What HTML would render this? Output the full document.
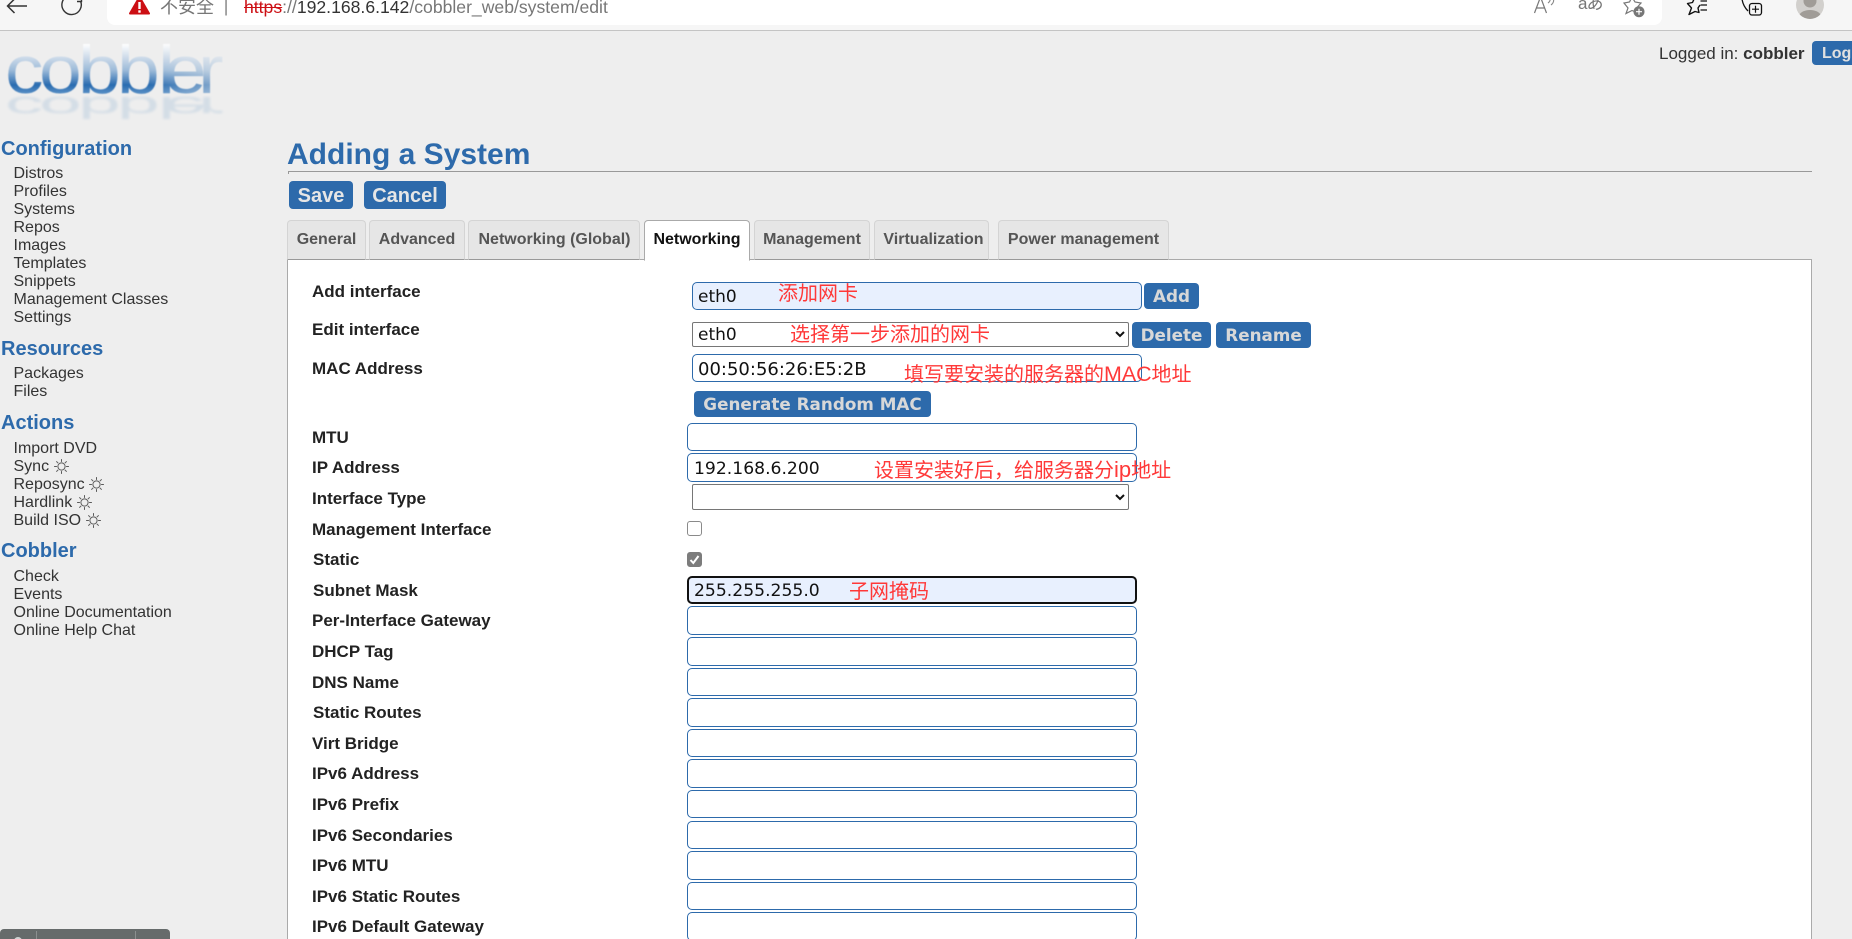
<!DOCTYPE html>
<html lang="zh-CN">
<head>
<meta charset="utf-8">
<title>Adding a System</title>
<style>
html,body{margin:0;padding:0;width:1852px;height:939px;overflow:hidden;background:#eee;font-family:"Liberation Sans",Arial,sans-serif;color:#333}
.a{position:absolute;white-space:nowrap}
#root{position:relative;width:1852px;height:939px;overflow:hidden}
.h{position:absolute;white-space:nowrap;left:1px;font-size:20px;font-weight:bold;color:#2d6aab;line-height:24px}
.l{position:absolute;white-space:nowrap;left:13.5px;font-size:16px;line-height:18px;color:#333}
.l svg{vertical-align:-3px}
.tab{position:absolute;top:220px;height:40px;box-sizing:border-box;background:#e6e6e6;border:1px solid #d4d4d4;border-bottom:1px solid #999;border-radius:4px 4px 0 0;font-size:16px;font-weight:bold;color:#555;line-height:38px;text-align:center;white-space:nowrap}
.tab.on{background:#fff;color:#111;border:1px solid #aaa;border-bottom:1px solid #fff;height:41px;z-index:3}
.lb{position:absolute;white-space:nowrap;left:312px;font-size:17px;font-weight:bold;line-height:20px;color:#222}
.in{position:absolute;box-sizing:border-box;margin:0;padding:2px 0 0 6px;border:1px solid #2d6aab;border-radius:5px;background:#fff;font-family:"DejaVu Sans",Verdana,sans-serif;font-size:17.2px;color:#111;outline:none;left:687px;width:450px}
.in.f{background:#e8f0fe}
.sel{position:absolute;box-sizing:border-box;left:692px;width:437px;margin:0;padding:1px 0 0 1px;border:1px solid #767676;border-radius:2px;background:#fff;font-family:"DejaVu Sans",Verdana,sans-serif;font-size:17px;color:#111}
.b{position:absolute;box-sizing:border-box;background:#2d6aab;border-radius:4px;color:#d8d8d8;font-family:"DejaVu Sans",Verdana,sans-serif;font-weight:bold;font-size:16.8px;text-align:center;white-space:nowrap}
.btn{position:absolute;box-sizing:border-box;top:181px;height:28px;background:#2d6aab;border-radius:4px;color:#e6e6e6;font-weight:bold;font-size:20px;line-height:30px;text-align:center}
.cn{position:absolute;white-space:nowrap;color:#ff3838;font-family:"Liberation Sans","Noto Sans CJK SC",sans-serif;font-size:20px;line-height:24px;z-index:5}
.cb{position:absolute;left:687px;width:15px;height:15px;margin:0;box-sizing:border-box;appearance:none;-webkit-appearance:none;border:1.5px solid #8a8a8a;border-radius:3px;background:#fff}
.cb.c{background:#7c7c7c;border-color:#7c7c7c}
</style>
</head>
<body>
<div id="root">

<!-- browser chrome -->
<div class="a" style="left:0;top:0;width:1852px;height:31px;box-sizing:border-box;background:#f6f6f6;border-bottom:1px solid #c4c4c4"></div>
<div class="a" style="left:107px;top:-10px;width:1555px;height:35px;background:#fff;border-radius:8px"></div>
<svg class="a" style="left:0;top:0" width="1852" height="30" viewBox="0 0 1852 30">
  <defs><clipPath id="pc"><circle cx="1810" cy="5" r="14"/></clipPath></defs>
  <path d="M27 6H8M14.500 -1L7.500 6l7 7" fill="none" stroke="#333" stroke-width="1.5"/>
  <path d="M80.500 1A9.700 9.700 0 1 1 76 -3.800" fill="none" stroke="#333" stroke-width="1.4"/>
  <path d="M81.500 -3V1.500H77" fill="none" stroke="#333" stroke-width="1.4"/>
  <path d="M139.500 -3L149 13.500H130Z" fill="#cc0f14" stroke="#cc0f14" stroke-width="2" stroke-linejoin="round"/>
  <rect x="138.300" y="2" width="2.400" height="7" fill="#fff"/><rect x="138.300" y="10.300" width="2.400" height="2.400" fill="#fff"/>
  <rect x="225.300" y="0" width="1.500" height="15.500" fill="#888"/>
  <!-- read aloud -->
  <path d="M1534.500 13L1540.500 -3L1546.500 13M1536.500 8H1544.500" fill="none" stroke="#777" stroke-width="1.200"/>
  <path d="M1548 3Q1551 1 1550 -3M1551 5Q1555 2 1553 -3" fill="none" stroke="#888" stroke-width="1.100"/>
  <!-- star plus -->
  <path d="M1632 -3L1635 2L1641 3L1637 7.500L1638 13L1632 10.500L1626 13.500L1628 8L1624 3L1629.500 2Z" fill="none" stroke="#777" stroke-width="1.200"/>
  <circle cx="1639" cy="11.700" r="5.500" fill="#777"/>
  <path d="M1636 11.700h6M1639 8.700v6" stroke="#fff" stroke-width="1.200"/>
  <!-- favorites -->
  <path d="M1695 -3L1692.500 2.500L1687.500 3.500L1691.500 8L1689 14.500L1695 11.500L1699 12.500L1698 8L1700 5" fill="none" stroke="#111" stroke-width="1.400" stroke-linejoin="round"/>
  <path d="M1700.500 1h6.500M1700.500 5h6.500M1700.500 10h6.500" fill="none" stroke="#111" stroke-width="1.300"/>
  <!-- collections -->
  <path d="M1742 -1Q1743 6 1748 11" fill="none" stroke="#111" stroke-width="1.300"/>
  <rect x="1749.500" y="3.500" width="12" height="11.500" rx="2.500" fill="none" stroke="#111" stroke-width="1.300"/>
  <path d="M1752 9.200h7M1755.500 5.700v7" stroke="#111" stroke-width="1.200"/>
  <!-- profile -->
  <circle cx="1810" cy="5" r="14" fill="#d2d0cd"/>
  <g clip-path="url(#pc)" fill="#a09c97">
    <circle cx="1810" cy="1" r="6.500"/>
    <ellipse cx="1810" cy="16.500" rx="11" ry="6.500"/>
  </g>
</svg>
<div class="a" style="left:160px;top:-3px;font:18px/20px 'Liberation Sans','Noto Sans CJK SC',sans-serif;color:#777">不安全</div>
<div class="a" style="left:244px;top:-3px;font-size:17.6px;line-height:20px;color:#777"><span style="color:#cc0f14;text-decoration:line-through">https</span>://<span style="color:#333">192.168.6.142</span>/cobbler_web/system/edit</div>
<div class="a" style="left:1578px;top:-6px;font:17px/20px 'Liberation Sans','Noto Sans CJK JP',sans-serif;color:#777;letter-spacing:-1px">aあ</div>

<!-- logo -->
<svg class="a" style="left:0;top:40px" width="240" height="90" viewBox="0 40 240 90">
  <defs>
    <linearGradient id="g" x1="0" y1="44" x2="0" y2="94" gradientUnits="userSpaceOnUse">
      <stop offset="0" stop-color="#fff"/>
      <stop offset=".26" stop-color="#cfdcea"/>
      <stop offset=".52" stop-color="#9dbbd9"/>
      <stop offset=".82" stop-color="#2a6cb0"/>
      <stop offset="1" stop-color="#5a90c6"/>
    </linearGradient>
    <linearGradient id="fade" x1="0" y1="0" x2="1" y2="0">
      <stop offset="0" stop-color="#eee" stop-opacity="0"/>
      <stop offset="1" stop-color="#eee" stop-opacity=".55"/>
    </linearGradient>
    <filter id="bl"><feGaussianBlur stdDeviation=".4"/></filter>
    <filter id="bl2"><feGaussianBlur stdDeviation="1.3"/></filter>
  </defs>
  <g filter="url(#bl2)">
    <text transform="scale(1.13 -0.45)" x="4.400 34.500 69 103.500 139.800 145 175.200" y="-215.600" font-family="Liberation Sans" font-size="68" fill="#c4d2e2" opacity=".6">cobbler</text>
  </g>
  <g filter="url(#bl)">
    <text transform="scale(1.13 1)" x="4.400 34.500 69 103.500 139.800 145 175.200" y="93" font-family="Liberation Sans" font-size="68" fill="url(#g)">cobbler</text>
  </g>
  <rect x="150" y="44" width="80" height="52" fill="url(#fade)"/>
</svg>

<!-- logged in -->
<div class="a" style="left:1659px;top:44px;font-size:17px;line-height:20px;color:#333">Logged in: <b>cobbler</b></div>
<div class="a" style="left:1812px;top:41px;width:60px;height:24px;background:#2d6aab;border-radius:4px;color:#e0e0e0;font-weight:bold;font-size:16px;line-height:25px;padding-left:10px;box-sizing:border-box">Logout</div>

<!-- sidebar -->
<div class="h" style="top:137px">Configuration</div>
<div class="l" style="top:165px">Distros</div>
<div class="l" style="top:183px">Profiles</div>
<div class="l" style="top:201px">Systems</div>
<div class="l" style="top:219px">Repos</div>
<div class="l" style="top:237px">Images</div>
<div class="l" style="top:255px">Templates</div>
<div class="l" style="top:273px">Snippets</div>
<div class="l" style="top:291px">Management Classes</div>
<div class="l" style="top:309px">Settings</div>
<div class="h" style="top:337px">Resources</div>
<div class="l" style="top:365px">Packages</div>
<div class="l" style="top:383px">Files</div>
<div class="h" style="top:411px">Actions</div>
<div class="l" style="top:440px">Import DVD</div>
<div class="l" style="top:458px">Sync <svg width="15" height="15" viewBox="-7.500 -7.500 15 15"><g fill="none" stroke="#5a5a5a"><circle r="3.600"/><path d="M0-4.600V-7.400M0 4.600V7.400M-4.600 0H-7.400M4.600 0H7.400M-3.300-3.300L-5.200-5.200M3.300-3.300L5.200-5.200M-3.300 3.300L-5.200 5.200M3.300 3.300L5.200 5.200"/></g></svg></div>
<div class="l" style="top:476px">Reposync <svg width="15" height="15" viewBox="-7.500 -7.500 15 15"><g fill="none" stroke="#5a5a5a"><circle r="3.600"/><path d="M0-4.600V-7.400M0 4.600V7.400M-4.600 0H-7.400M4.600 0H7.400M-3.300-3.300L-5.200-5.200M3.300-3.300L5.200-5.200M-3.300 3.300L-5.200 5.200M3.300 3.300L5.200 5.200"/></g></svg></div>
<div class="l" style="top:494px">Hardlink <svg width="15" height="15" viewBox="-7.500 -7.500 15 15"><g fill="none" stroke="#5a5a5a"><circle r="3.600"/><path d="M0-4.600V-7.400M0 4.600V7.400M-4.600 0H-7.400M4.600 0H7.400M-3.300-3.300L-5.200-5.200M3.300-3.300L5.200-5.200M-3.300 3.300L-5.200 5.200M3.300 3.300L5.200 5.200"/></g></svg></div>
<div class="l" style="top:512px">Build ISO <svg width="15" height="15" viewBox="-7.500 -7.500 15 15"><g fill="none" stroke="#5a5a5a"><circle r="3.600"/><path d="M0-4.600V-7.400M0 4.600V7.400M-4.600 0H-7.400M4.600 0H7.400M-3.300-3.300L-5.200-5.200M3.300-3.300L5.200-5.200M-3.300 3.300L-5.200 5.200M3.300 3.300L5.200 5.200"/></g></svg></div>
<div class="h" style="top:539px">Cobbler</div>
<div class="l" style="top:568px">Check</div>
<div class="l" style="top:586px">Events</div>
<div class="l" style="top:604px">Online Documentation</div>
<div class="l" style="top:622px">Online Help Chat</div>

<!-- bottom-left bar -->
<div class="a" style="left:0;top:929px;width:170px;height:10px;background:#666b6b;border-radius:4px 4px 0 0"></div>
<div class="a" style="left:14px;top:937px;width:8px;height:8px;border-radius:50%;background:#cfd2d2"></div>
<div class="a" style="left:36px;top:931px;width:1px;height:8px;background:#8b8f8f"></div>
<div class="a" style="left:135px;top:931px;width:1px;height:8px;background:#8b8f8f"></div>

<!-- title -->
<div class="a" style="left:287px;top:137px;font-size:30px;font-weight:bold;line-height:36px;color:#2d6aab">Adding a System</div>
<div class="a" style="left:288px;top:171px;width:1524px;height:1px;background:#999"></div>
<div class="a" style="left:288px;top:171px;width:1px;height:3px;background:#999"></div>
<div class="btn" style="left:289px;width:64px">Save</div>
<div class="btn" style="left:364px;width:82px">Cancel</div>

<!-- panel -->
<div class="a" style="left:287px;top:259px;width:1525px;height:690px;box-sizing:border-box;background:#fff;border:1px solid #aaa"></div>

<!-- tabs -->
<div class="tab" style="left:287px;width:79px">General</div>
<div class="tab" style="left:369px;width:96px">Advanced</div>
<div class="tab" style="left:468px;width:172px;padding-left:1px">Networking (Global)</div>
<div class="tab on" style="left:644px;width:106px">Networking</div>
<div class="tab" style="left:754px;width:116px">Management</div>
<div class="tab" style="left:874px;width:115px;padding-left:4px">Virtualization</div>
<div class="tab" style="left:998px;width:171px">Power management</div>

<!-- labels -->
<div class="lb" style="top:282px">Add interface</div>
<div class="lb" style="top:320px">Edit interface</div>
<div class="lb" style="top:359px">MAC Address</div>
<div class="lb" style="top:428px">MTU</div>
<div class="lb" style="top:458px">IP Address</div>
<div class="lb" style="top:489px">Interface Type</div>
<div class="lb" style="top:520px">Management Interface</div>
<div class="lb" style="top:550px;left:313px">Static</div>
<div class="lb" style="top:581px;left:313px">Subnet Mask</div>
<div class="lb" style="top:611px">Per-Interface Gateway</div>
<div class="lb" style="top:642px">DHCP Tag</div>
<div class="lb" style="top:673px">DNS Name</div>
<div class="lb" style="top:703px;left:313px">Static Routes</div>
<div class="lb" style="top:734px">Virt Bridge</div>
<div class="lb" style="top:764px">IPv6 Address</div>
<div class="lb" style="top:795px">IPv6 Prefix</div>
<div class="lb" style="top:826px">IPv6 Secondaries</div>
<div class="lb" style="top:856px">IPv6 MTU</div>
<div class="lb" style="top:887px">IPv6 Static Routes</div>
<div class="lb" style="top:917px">IPv6 Default Gateway</div>

<!-- fields -->
<input class="in f" style="left:692px;width:450px;top:282px;height:28px;padding-left:5px;font-size:17px" value="eth0">
<div class="b" style="left:1144px;top:283px;width:55px;height:26px;line-height:26px">Add</div>
<select class="sel" style="top:322px;height:25px"><option>eth0</option></select>
<div class="b" style="left:1132px;top:322px;width:79px;height:26px;line-height:26px">Delete</div>
<div class="b" style="left:1216px;top:322px;width:95px;height:26px;line-height:26px">Rename</div>
<input class="in" style="left:692px;width:450px;top:354px;height:28px;padding-left:5px;font-size:18px" value="00:50:56:26:E5:2B">
<div class="b" style="left:694px;top:391px;width:237px;height:26px;line-height:26px">Generate Random MAC</div>
<input class="in" style="top:423px;height:28px">
<input class="in" style="top:453px;height:29px" value="192.168.6.200">
<select class="sel" style="top:484px;height:26px"><option></option></select>
<input class="cb" type="checkbox" style="top:521px">
<input class="cb c" type="checkbox" checked style="top:552px">
<svg class="a" style="left:687px;top:552px" width="15" height="15" viewBox="0 0 15 15"><path d="M3.500 8L6.300 11L11.500 4" fill="none" stroke="#fff" stroke-width="2"/></svg>
<input class="in f" style="top:576px;height:28px;border:2px solid #111;padding-left:5px" value="255.255.255.0">
<input class="in" style="top:606px;height:29px">
<input class="in" style="top:637px;height:29px">
<input class="in" style="top:668px;height:28px">
<input class="in" style="top:698px;height:29px">
<input class="in" style="top:729px;height:28px">
<input class="in" style="top:759px;height:29px">
<input class="in" style="top:790px;height:28px">
<input class="in" style="top:821px;height:28px">
<input class="in" style="top:851px;height:29px">
<input class="in" style="top:882px;height:28px">
<input class="in" style="top:912px;height:29px">

<!-- annotations -->
<div class="cn" style="left:778px;top:282px">添加网卡</div>
<div class="cn" style="left:790px;top:323px">选择第一步添加的网卡</div>
<div class="cn" style="left:904px;top:362px">填写要安装的服务器的<span style="font-size:21.4px">MAC</span>地址</div>
<div class="cn" style="left:874px;top:458px">设置安装好后，给服务器分<span style="font-size:22px">ip</span>地址</div>
<div class="cn" style="left:849px;top:580px">子网掩码</div>

</div>
</body>
</html>
